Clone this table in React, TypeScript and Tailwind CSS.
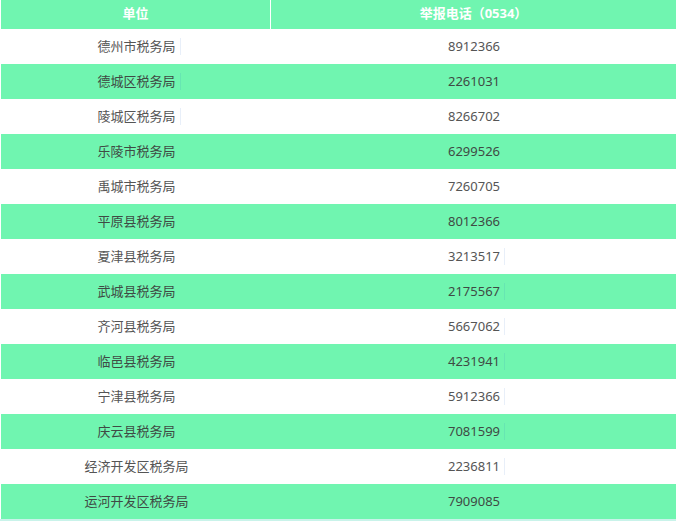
const rows: [string, string][] = [
  ["德州市税务局", "8912366"],
  ["德城区税务局", "2261031"],
  ["陵城区税务局", "8266702"],
  ["乐陵市税务局", "6299526"],
  ["禹城市税务局", "7260705"],
  ["平原县税务局", "8012366"],
  ["夏津县税务局", "3213517"],
  ["武城县税务局", "2175567"],
  ["齐河县税务局", "5667062"],
  ["临邑县税务局", "4231941"],
  ["宁津县税务局", "5912366"],
  ["庆云县税务局", "7081599"],
  ["经济开发区税务局", "2236811"],
  ["运河开发区税务局", "7909085"],
];

// faint caret-like rule that sits just after some cell texts
function Cell({ text, mark }: { text: string; mark: boolean }) {
  return (
    <span className="relative">
      {text}
      {mark && <span className="absolute right-[-5px] top-[1px] bottom-[1px] w-px bg-[#2060c0]/10" />}
    </span>
  );
}

export default function App() {
  return (
    <div
      className="w-[676px] h-[521px] bg-[#c9f3ea] overflow-hidden text-[13px]"
      style={{ fontFamily: '"Noto Sans", "Noto Sans CJK SC", sans-serif' }}
    >
      <div className="bg-white pl-px">
        <div className="flex h-[29px] bg-[#70f5b0] text-white font-bold">
          <div className="w-[270px] flex items-center justify-center pb-px border-r border-white">单位</div>
          <div className="flex-1 flex items-center justify-center pb-px">举报电话（0534）</div>
        </div>
        {rows.map(([name, tel], i) => (
          <div
            key={name}
            className={`flex h-[35px] ${i % 2 === 1 ? "bg-[#70f5b0] text-[#3f4a44]" : "bg-white text-[#555]"}`}
          >
            <div className="w-[271px] flex items-center justify-center">
              <Cell text={name} mark={i < 3} />
            </div>
            <div className="flex-1 flex items-center justify-center">
              <Cell text={tel} mark={i >= 6 && i < 13} />
            </div>
          </div>
        ))}
      </div>
    </div>
  );
}
